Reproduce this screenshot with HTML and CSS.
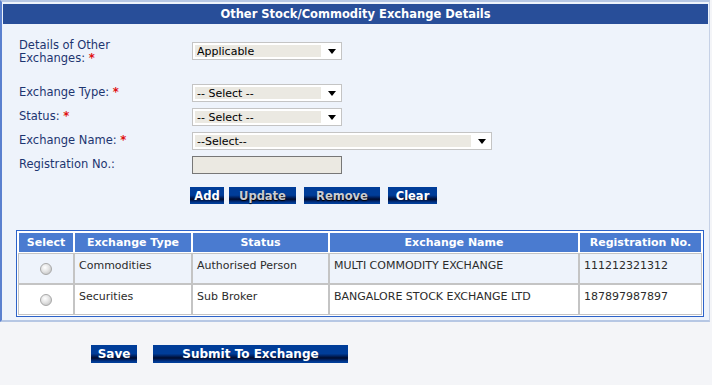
FILE: index.html
```html
<!DOCTYPE html>
<html lang="en">
<head>
    <meta charset="UTF-8">
    <title>Other Stock/Commodity Exchange Details</title>
    <link rel="stylesheet" href="styles.css">
</head>
<body>

<div class="panel">
    <div class="panel-title">Other Stock/Commodity Exchange Details</div>

    <div class="form">
        <div class="form-row tall">
            <label for="other-exchanges">Details of Other<br>Exchanges: <span class="req">*</span></label>
            <div class="select-wrap">
                <select id="other-exchanges">
                    <option>Applicable</option>
                </select>
            </div>
        </div>
        <div class="form-row">
            <label for="exchange-type">Exchange Type: <span class="req">*</span></label>
            <div class="select-wrap">
                <select id="exchange-type">
                    <option>-- Select --</option>
                </select>
            </div>
        </div>
        <div class="form-row">
            <label for="status">Status: <span class="req">*</span></label>
            <div class="select-wrap">
                <select id="status">
                    <option>-- Select --</option>
                </select>
            </div>
        </div>
        <div class="form-row">
            <label for="exchange-name">Exchange Name: <span class="req">*</span></label>
            <div class="select-wrap wide">
                <select id="exchange-name">
                    <option>--Select--</option>
                </select>
            </div>
        </div>
        <div class="form-row">
            <label for="reg-no">Registration No.:</label>
            <input type="text" id="reg-no" class="text-input" disabled>
        </div>

        <div class="button-row">
            <button class="btn btn-add">Add</button>
            <button class="btn btn-update" disabled>Update</button>
            <button class="btn btn-remove" disabled>Remove</button>
            <button class="btn btn-clear">Clear</button>
        </div>
    </div>

    <div class="grid-wrap">
        <table class="grid">
            <thead>
                <tr>
                    <th class="col-select">Select</th>
                    <th class="col-type">Exchange Type</th>
                    <th class="col-status">Status</th>
                    <th class="col-name">Exchange Name</th>
                    <th class="col-reg">Registration No.</th>
                </tr>
            </thead>
            <tbody>
                <tr class="alt">
                    <td class="radio-cell"><input type="radio" name="row-select" class="radio"></td>
                    <td>Commodities</td>
                    <td>Authorised Person</td>
                    <td>MULTI COMMODITY EXCHANGE</td>
                    <td>111212321312</td>
                </tr>
                <tr>
                    <td class="radio-cell"><input type="radio" name="row-select" class="radio"></td>
                    <td>Securities</td>
                    <td>Sub Broker</td>
                    <td>BANGALORE STOCK EXCHANGE LTD</td>
                    <td>187897987897</td>
                </tr>
            </tbody>
        </table>
    </div>
</div>

<div class="footer">
    <button class="btn save">Save</button>
    <button class="btn submit">Submit To Exchange</button>
</div>

</body>
</html>
```

FILE: styles.css
```css
body {
    margin: 0;
    background-color: #f4f5f8;
    font-family: "DejaVu Sans", Verdana, sans-serif;
    font-size: 11px;
    color: #1d3570;
}
.panel {
    width: 707px;
    padding: 2px 0 3px 0;
    background-color: #eef3fb;
    border-top: 2px solid #b6c7e4;
    border-left: 2px solid #5a80cf;
    border-right: 1px solid #c6d1e6;
    border-bottom: 2px solid #b6c7e4;
}
.panel-title {
    margin: 0 1px;
    height: 20px;
    line-height: 20px;
    background-color: #284e99;
    color: #ffffff;
    font-weight: bold;
    font-size: 11.5px;
    text-align: center;
}
.form {
    padding: 15px 0 0 17px;
}
.form-row {
    display: grid;
    grid-template-columns: 173px auto;
    align-items: start;
    height: 24px;
}
.form-row label {
    line-height: 17px;
    font-size: 11.5px;
}
.form-row.tall {
    height: 45px;
}
.form-row.tall label {
    line-height: 13px;
}
.form-row.tall .select-wrap {
    margin-top: 3px;
}
.req {
    color: #e01010;
    font-weight: bold;
}
.select-wrap {
    position: relative;
    width: 150px;
}
.select-wrap.wide {
    width: 300px;
}
.select-wrap select {
    -webkit-appearance: none;
    appearance: none;
    width: 100%;
    height: 18px;
    margin: 0;
    padding: 0 0 0 4px;
    border: 1px solid #c4c4c4;
    border-radius: 0;
    background: linear-gradient(to right, #ebe9e2 calc(100% - 20px), #ffffff 0);
    box-shadow: inset 0 0 0 2px #ffffff;
    font-family: "DejaVu Sans", Verdana, sans-serif;
    font-size: 11px;
    color: #000000;
}
.select-wrap::after {
    content: "";
    position: absolute;
    right: 6px;
    top: 7px;
    border-left: 4px solid transparent;
    border-right: 4px solid transparent;
    border-top: 5px solid #000000;
    pointer-events: none;
}
.text-input {
    width: 150px;
    height: 18px;
    margin: 0;
    box-sizing: border-box;
    border: 1px solid #777777;
    background-color: #ebe9e2;
}
.button-row {
    display: flex;
    margin: 7px 0 0 171px;
}
.btn {
    height: 17px;
    padding: 0;
    border: none;
    background: linear-gradient(to bottom, #003d99 0, #003d99 48%, #002466 60%, #000c2e 72%, #00266e 84%, #003d99 94%);
    color: #ffffff;
    font-family: "DejaVu Sans", Verdana, sans-serif;
    font-size: 11.5px;
    font-weight: bold;
    text-align: center;
    cursor: pointer;
}
.btn:disabled {
    color: #c8ccd4;
    text-shadow: 0 1px 1px #000000;
    cursor: default;
}
.btn-add { width: 34px; }
.btn-update { width: 67px; margin-left: 5px; }
.btn-remove { width: 76px; margin-left: 8px; }
.btn-clear { width: 49px; margin-left: 8px; }
.grid-wrap {
    padding: 26px 0 0 14px;
}
.grid {
    table-layout: fixed;
    border-collapse: separate;
    border-spacing: 0;
    border: 1px solid #2c62c8;
    padding: 1px;
    background-color: #ffffff;
}
.grid th {
    height: 19px;
    padding: 0;
    border: 1px solid #ffffff;
    background-color: #4a7bd0;
    color: #ffffff;
    font-weight: bold;
    text-align: center;
}
.grid td {
    height: 19px;
    padding: 5px 4px 5px 4px;
    border: 1px solid #c4c4c4;
    vertical-align: top;
    color: #2b2b2b;
}
.grid tr.alt td {
    background-color: #eef3fb;
}
.col-select { width: 54px; }
.col-type { width: 116px; }
.col-status { width: 135px; }
.col-name { width: 248px; }
.col-reg { width: 121px; }
.grid td.radio-cell {
    text-align: center;
    vertical-align: middle;
    padding: 4px 0 0 0;
}
.radio {
    -webkit-appearance: none;
    appearance: none;
    width: 12px;
    height: 12px;
    margin: 0;
    border: 1px solid #a8a8a8;
    border-radius: 50%;
    background: radial-gradient(circle at 40% 35%, #ffffff 0, #e4e4e4 45%, #b8b8b8 100%);
}
.footer {
    display: flex;
    gap: 16px;
    padding: 23px 0 0 91px;
}
.footer .btn {
    height: 18px;
    font-size: 12px;
}
.footer .save {
    width: 46px;
}
.footer .submit {
    width: 195px;
}
```
